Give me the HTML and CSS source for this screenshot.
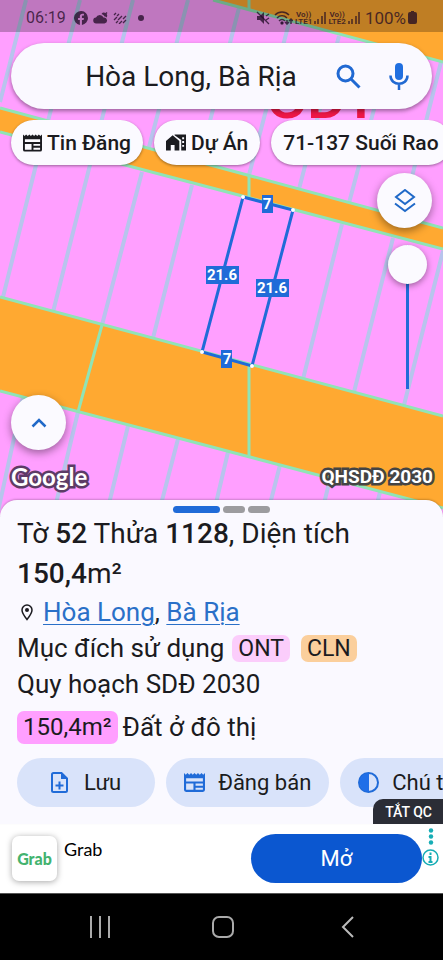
FILE: index.html
```html
<!DOCTYPE html>
<html lang="vi">

<head>
  <meta charset="UTF-8">
  <meta name="viewport" content="width=device-width, initial-scale=1.0">
  <title>Hòa Long, Bà Rịa</title>
  <link rel="stylesheet" href="styles.css">
</head>

<body>
  <div class="app">
    <section class="map">
      <svg class="map-canvas" viewBox="0 0 443 516" preserveAspectRatio="xMidYMin slice">
        <rect width="443" height="516" fill="#ff9fff"/>
        <!-- plot borders -->
        <g class="plot-line">
          <path d="M26 0L0 102M80 0L48 121M133 0L98 134M188 0L149 147M241 0L200 160M295 0L249 175M339 36L299 189M390 49L349 203M441 62L402 216"/>
          <path d="M46 125L3 297M100 125L53 312M142 172L102 325M192 185L153 338M342 224L303 379M393 238L354 392M443 251L404 405"/>
          <path d="M23 397L-3 516M78 412L53 516M128 426L106 516M178 439L158 516M228 452L213 516M280 465L267 516M330 479L321 516M380 492L374 516"/>
        </g>
        <!-- roads -->
        <g fill="#ffa931">
          <path d="M213 0L443 62V0Z"/>
          <path d="M0 108L443 228V249L0 132Z"/>
          <path d="M0 297L443 416V508L0 391Z"/>
        </g>
        <g class="road-line">
          <path d="M213 0L443 62M0 108L443 228M0 132L443 249M0 297L443 416M0 391L443 508"/>
          <path d="M249 0V10M249 175V198M249 366V457M102 325L78 412"/>
        </g>
        <text class="map-zone" x="267" y="118">ODT</text>
        <!-- selected plot -->
        <path class="plot" d="M243 197L293 210L252 366L202 352Z"/>
        <g fill="#fff">
          <circle cx="243" cy="197" r="2"/>
          <circle cx="293" cy="210" r="2"/>
          <circle cx="252" cy="366" r="2"/>
          <circle cx="202" cy="352" r="2"/>
        </g>
        <g fill="#206bd8">
          <rect x="262" y="195" width="11" height="18"/>
          <rect x="206" y="266" width="33" height="18"/>
          <rect x="256" y="279" width="33" height="18"/>
          <rect x="221" y="350" width="11" height="18"/>
        </g>
        <g class="plot-size">
          <text x="267" y="209">7</text>
          <text x="222" y="280">21.6</text>
          <text x="272" y="293">21.6</text>
          <text x="227" y="364">7</text>
        </g>
      </svg>

      <header class="status">
        <span class="clock">06:19</span>
        <svg width="14" height="14" viewBox="0 0 24 24"><path fill="currentColor" d="M24 12a12 12 0 1 0-14 11.900V15.500H7V12h3V9.400C10 6.400 11.800 4.700 14.500 4.700c1.300 0 2.600.200 2.600.200v3h-1.500c-1.500 0-2 .900-2 1.800V12H17l-.500 3.500H13.600v8.400A12 12 0 0 0 24 12z"/></svg>
        <svg width="15" height="12" viewBox="0 0 30 24"><path fill="currentColor" d="M7 23a6 6 0 0 1-1-12 8 8 0 0 1 15 0 6 6 0 0 1 2 12zM17 4a6 6 0 0 1 10 7c-1-1-2-2-4-2-1-2-3-4-6-5zM27 0l2 2-2 2-2-2z"/></svg>
        <svg width="14" height="12" viewBox="0 0 14 12"><path stroke="currentColor" stroke-width="1.300" d="M1 3l2-2M4 4l2-2M1 8l3-3M5 8l4-4M3 11l2-2M6 12l3-3M10 7l3-3M10 11l3-3" fill="none"/></svg>
        <span class="dot"></span>
        <span class="status-right">
          <svg width="14" height="14" viewBox="0 0 14 14"><path fill="currentColor" d="M1 5h3l4-4v12L4 9H1z"/><path d="M1 1l12 12M10 5l3-2M10 9l3-2" stroke="currentColor" stroke-width="1.300"/></svg>
          <svg class="wifi" width="19" height="14" viewBox="0 0 19 14" fill="none" stroke="currentColor" stroke-width="1.500"><path d="M1 4c4-4 10-4 14 0M3 7c3-3 7-3 10 0M5 10c2-2 4-2 6 0M13 13V9M11 11l2 2 2-2M17 8v5M15 10l2-2 2 2"/><circle cx="8" cy="12" r="1" fill="currentColor"/></svg>
          <span class="lte">Vo))<br>LTE1</span>
          <svg width="12" height="12" viewBox="0 0 12 12"><path stroke="currentColor" stroke-width="1.500" d="M1 12V9M4 12V7M8 12V4M11 12V0"/></svg>
          <span class="lte">Vo))<br>LTE2</span>
          <svg width="12" height="12" viewBox="0 0 12 12"><path stroke="currentColor" stroke-width="1.500" d="M1 12V9M4 12V7M8 12V4M11 12V0"/></svg>
          <span class="battery">100%</span>
          <svg width="9" height="13" viewBox="0 0 9 13"><path fill="currentColor" d="M3 0h3v1h1q2 0 2 2v8q0 2-2 2H2q-2 0-2-2V3q0-2 2-2h1z"/></svg>
        </span>
      </header>

      <form class="search">
        <input class="search-input" type="text" value="Hòa Long, Bà Rịa" aria-label="Tìm kiếm">
        <button class="icon-btn" type="button" aria-label="Tìm">
          <svg width="25" height="25" viewBox="0 0 25 25" fill="none" stroke="#2069d2" stroke-width="3"><circle cx="9.500" cy="9.500" r="7.500"/><path d="M15 15l8.500 8.500"/></svg>
        </button>
        <button class="icon-btn" type="button" aria-label="Giọng nói">
          <svg width="20" height="27" viewBox="0 0 20 27"><rect x="6" y="0" width="8" height="17" rx="4" fill="#206fe0"/><path d="M1.500 12.500c0 11 17 11 17 0M10 20v7" fill="none" stroke="#2069d2" stroke-width="2.500"/></svg>
        </button>
      </form>

      <nav class="chips">
        <button class="chip" type="button">
          <svg width="19" height="18" viewBox="0 0 20 18"><path fill="currentColor" fill-rule="evenodd" d="M0 0l1.700 1.500L3.300 0 5 1.500 6.700 0l1.600 1.500L10 0l1.700 1.500L13.300 0 15 1.500 16.700 0l1.600 1.500L20 0v16q0 2-2 2H2q-2 0-2-2zM2 5v3h16V5zM2 10v6h7v-6zM11 10v2h7v-2zM11 14v2h7v-2z"/></svg>
          Tin Đăng
        </button>
        <button class="chip" type="button">
          <svg width="20" height="17" viewBox="0 0 21 17"><path fill="currentColor" fill-rule="evenodd" d="M0 7l7-6 7 6v10H9v-6H5v6H0zM9 0h12v17h-5V6L9 1zM17 3v2h2V3zM17 7v2h2V7zM17 11v2h2v-2z"/></svg>
          Dự Án
        </button>
        <button class="chip" type="button">71-137 Suối Rao</button>
      </nav>

      <div class="map-tools">
        <button class="fab" type="button" aria-label="Lớp bản đồ">
          <svg width="22" height="24" viewBox="0 0 22 24" fill="none" stroke="#2069c8" stroke-width="2"><path d="M11 1l9 7-9 7-9-7z"/><path d="M1 14.500l10 7.500 10-7.500"/></svg>
        </button>
        <input class="opacity" type="range" min="0" max="100" value="0" aria-label="Độ trong suốt">
      </div>

      <div class="map-bottom">
        <button class="fab" type="button" aria-label="Mở rộng">
          <svg width="16" height="10" viewBox="0 0 16 10" fill="none" stroke="#2069c8" stroke-width="2.500"><path d="M1.500 8.500L8 2l6.500 6.500"/></svg>
        </button>
        <div class="map-credit">
          <span class="google">Google</span>
          <span class="layer-name">QHSDĐ 2030</span>
        </div>
      </div>
    </section>

    <main class="sheet">
      <div class="pager"><i class="active"></i><i></i><i></i></div>
      <h1 class="title">Tờ <b>52</b> Thửa <b>1128</b>, Diện tích <b>150,4</b>m²</h1>
      <p class="line">
        <svg class="pin" width="12" height="17" viewBox="0 0 12 17"><path d="M6 1a5 5 0 0 1 5 5c0 3-3 7-5 9.500C4 13 1 9 1 6a5 5 0 0 1 5-5z" fill="none" stroke="#1b1b20" stroke-width="1.500"/><circle cx="6" cy="6" r="2" fill="#1b1b20"/></svg>
        <span><a href="#">Hòa Long</a>, <a href="#">Bà Rịa</a></span>
      </p>
      <p class="line">Mục đích sử dụng <span class="tags"><span class="tag ont">ONT</span><span class="tag cln">CLN</span></span></p>
      <p class="line">Quy hoạch SDĐ 2030</p>
      <p class="line plan"><span class="area">150,4m²</span>Đất ở đô thị</p>
      <div class="actions">
        <button class="action save" type="button">
          <svg width="17" height="21" viewBox="0 0 17 21"><path d="M10.500 1H2.500Q1 1 1 2.500v16Q1 20 2.500 20h12q1.500 0 1.500-1.500V6.500z" fill="none" stroke="#206bd8" stroke-width="2"/><path d="M10 1v6h6z" fill="#206bd8"/><path d="M8.500 9.500v8M4.500 13.500h8" stroke="#206bd8" stroke-width="2"/></svg>
          Lưu
        </button>
        <button class="action" type="button">
          <svg width="21" height="19" viewBox="0 0 20 18"><path fill="#206bd8" fill-rule="evenodd" d="M0 0l1.700 1.500L3.300 0 5 1.500 6.700 0l1.600 1.500L10 0l1.700 1.500L13.300 0 15 1.500 16.700 0l1.600 1.500L20 0v16q0 2-2 2H2q-2 0-2-2zM2 5v3h16V5zM2 10v6h7v-6zM11 10v2h7v-2zM11 14v2h7v-2z"/></svg>
          Đăng bán
        </button>
        <button class="action" type="button">
          <svg width="21" height="21" viewBox="0 0 21 21"><circle cx="10.500" cy="10.500" r="9.500" fill="none" stroke="#206bd8" stroke-width="2"/><path d="M11 1a9.500 9.500 0 0 0 0 19z" fill="#206fe8"/></svg>
          Chú thích
        </button>
      </div>
      <button class="ad-off" type="button">TẮT QC</button>
    </main>

    <aside class="ad">
      <div class="ad-logo">Grab</div>
      <div class="ad-name">Grab</div>
      <button class="ad-open" type="button">Mở</button>
      <div class="ad-info">
        <svg width="6" height="17" viewBox="0 0 6 17" fill="#16adb5"><circle cx="3" cy="2.500" r="2.200"/><circle cx="3" cy="8.500" r="2.200"/><circle cx="3" cy="14.500" r="2.200"/></svg>
        <svg width="17" height="17" viewBox="0 0 17 17"><circle cx="8.500" cy="8.500" r="7.500" fill="none" stroke="#16adb5" stroke-width="1.500"/><path d="M8.500 3.500v2.500M6.500 8h2v5M6.500 13h4" fill="none" stroke="#16adb5" stroke-width="2"/></svg>
      </div>
    </aside>

    <footer class="nav">
      <button type="button" aria-label="Gần đây"><svg width="22" height="22" viewBox="0 0 22 22"><path d="M2 0v22M11 0v22M20 0v22" stroke="#aaa" stroke-width="2"/></svg></button>
      <button type="button" aria-label="Trang chủ"><svg width="22" height="22" viewBox="0 0 22 22"><rect x="1" y="1" width="20" height="20" rx="6" fill="none" stroke="#aaa" stroke-width="2"/></svg></button>
      <button type="button" aria-label="Quay lại"><svg width="13" height="22" viewBox="0 0 13 22"><path d="M12 1L2 11l10 10" fill="none" stroke="#bbb" stroke-width="2"/></svg></button>
    </footer>
  </div>
</body>

</html>
```
FILE: styles.css
```css
* {
  box-sizing: border-box;
}

body,
h1,
p {
  margin: 0;
}

body {
  font-family: Roboto, "Noto Sans", sans-serif;
  color: #1b1b20;
  background: #000;
}

button {
  font: inherit;
  color: inherit;
  border: none;
  padding: 0;
  cursor: pointer;
}

svg {
  flex: none;
}

.app {
  display: flex;
  flex-direction: column;
  min-height: 100vh;
  overflow: hidden;
}

/* map */
.map {
  position: relative;
  flex: 1;
  display: flex;
  flex-direction: column;
  padding-bottom: 26px;
}

.map-canvas {
  position: absolute;
  top: 0;
  left: 0;
  width: 100%;
  height: 100%;
}

.map > *:not(.map-canvas) {
  position: relative;
}

.plot-line {
  fill: none;
  stroke: #b8c4ed;
  stroke-width: 4;
}

.road-line {
  fill: none;
  stroke: #90e4b6;
  stroke-width: 3;
}

.map-zone {
  font: bold 52px "Liberation Sans", sans-serif;
  fill: #ee1747;
}

.plot {
  fill: none;
  stroke: #206bd8;
  stroke-width: 3;
}

.plot-size {
  font-size: 15px;
  font-weight: bold;
  fill: #fff;
  text-anchor: middle;
}

.status {
  display: flex;
  align-items: center;
  gap: 5px;
  height: 32px;
  padding: 3px 26px 0 26px;
  color: rgba(30, 8, 35, .75);
  background: rgba(0, 0, 0, .25);
}

.clock {
  font-size: 16px;
  margin-right: 3px;
}

.dot {
  width: 6px;
  height: 6px;
  margin-left: 6px;
  border-radius: 50%;
  background: currentColor;
}

.status-right {
  display: flex;
  align-items: center;
  gap: 2px;
  margin-left: auto;
}

.wifi {
  margin-left: 2px;
}

.lte {
  font-size: 8px;
  line-height: 7px;
  font-weight: bold;
  text-align: center;
}

.battery {
  font-size: 17px;
  margin-left: 3px;
}

.search {
  display: flex;
  align-items: center;
  gap: 28px;
  height: 66px;
  margin: 11px 11px 0;
  padding: 0 23px 0 63px;
  border-radius: 33px;
  background: #faf9ff;
  box-shadow: 0 2px 4px rgba(0, 0, 0, .4);
}

.search-input {
  flex: 1;
  min-width: 0;
  border: none;
  outline: none;
  padding: 0;
  background: none;
  color: #1b1b20;
  font: 28px Roboto, "Noto Sans", sans-serif;
  text-align: center;
}

.icon-btn {
  display: flex;
  background: none;
}

.chips {
  display: flex;
  gap: 11px;
  margin-top: 11px;
  padding-left: 11px;
  overflow: hidden;
  padding-bottom: 8px;
}

.chip {
  flex: none;
  display: flex;
  align-items: center;
  gap: 5px;
  height: 45px;
  padding: 0 12px;
  border-radius: 23px;
  background: #fbfaff;
  box-shadow: 0 1px 3px rgba(0, 0, 0, .4);
  font-size: 21px;
  font-weight: 500;
}

.map-tools {
  display: flex;
  flex-direction: column;
  align-items: flex-end;
  gap: 17px;
  padding-right: 11px;
}

.fab {
  display: flex;
  align-items: center;
  justify-content: center;
  width: 55px;
  height: 55px;
  border-radius: 50%;
  background: #fbfaff;
  box-shadow: 0 3px 8px rgba(0, 0, 0, .4);
}

.opacity {
  appearance: none;
  writing-mode: vertical-lr;
  width: 39px;
  height: 144px;
  margin: 0 5px;
  background: linear-gradient(#206bd8, #206bd8) center / 3px 100% no-repeat;
}

.opacity::-webkit-slider-thumb {
  appearance: none;
  width: 39px;
  height: 39px;
  border-radius: 50%;
  background: #fbfaff;
  box-shadow: 0 2px 6px rgba(0, 0, 0, .4);
}

.map-bottom {
  margin-top: auto;
  padding: 0 10px 0 11px;
}

.map-credit {
  display: flex;
  align-items: center;
  justify-content: space-between;
  height: 28px;
  margin-top: 12px;
}

.google,
.layer-name {
  color: #fff;
  paint-order: stroke fill;
  -webkit-text-stroke: 5px #444;
}

.google {
  font: bold 24px Lato, sans-serif;
  -webkit-text-stroke-color: #5d3b66;
}

.layer-name {
  font-size: 19px;
  font-weight: bold;
}

/* info sheet */
.sheet {
  position: relative;
  margin-top: -16px;
  padding: 6px 17px 17px;
  border-radius: 17px 17px 0 0;
  background: #faf9ff;
  box-shadow: 0 -1px 2px rgba(0, 0, 0, .2);
}

.pager {
  display: flex;
  justify-content: center;
  gap: 3px;
  margin-bottom: 1px;
}

.pager i {
  width: 22px;
  height: 7px;
  border-radius: 4px;
  background: #9c9c9f;
}

.pager .active {
  width: 47px;
  background: #206bd8;
}

.title {
  font-size: 28px;
  line-height: 40px;
  font-weight: normal;
}

.title b {
  font-weight: 500;
}

.line {
  display: flex;
  align-items: center;
  height: 36px;
  font-size: 26px;
}

.line a {
  color: #2a70c8;
  text-underline-offset: 3px;
  text-decoration-thickness: 1px;
}

.pin {
  margin: 0 10px 0 4px;
}

.tags {
  display: flex;
  gap: 11px;
  margin-left: 8px;
}

.tag {
  height: 27px;
  line-height: 27px;
  padding: 0 6px;
  border-radius: 7px;
  font-size: 23px;
}

.ont {
  background: #fbcdfb;
}

.cln {
  background: #fbcf9c;
}

.plan {
  height: 50px;
}

.area {
  height: 33px;
  line-height: 33px;
  padding: 0 6px;
  margin-right: 5px;
  border-radius: 7px;
  background: #ff9fff;
  font-size: 24px;
}

.actions {
  display: flex;
  gap: 11px;
  margin: 6px -17px 0 0;
  overflow: hidden;
}

.action {
  flex: none;
  display: flex;
  align-items: center;
  gap: 13px;
  height: 49px;
  padding: 0 18px;
  border-radius: 25px;
  background: #d9e3fa;
  font-size: 22px;
}

.save {
  gap: 16px;
  padding: 0 34px;
}

.ad-off {
  position: absolute;
  right: 0;
  bottom: 0;
  height: 25px;
  padding: 0 11px 0 12px;
  border-radius: 10px 0 0;
  background: #2b2d36;
  color: #fff;
  font-size: 14px;
  font-weight: 500;
}

/* ad banner */
.ad {
  display: flex;
  align-items: center;
  height: 69px;
  padding: 0 4px 0 12px;
  background: #fff;
}

.ad-logo {
  width: 45px;
  height: 45px;
  line-height: 45px;
  border-radius: 7px;
  background: #fff;
  box-shadow: 0 1px 6px rgba(0, 0, 0, .35);
  color: #43b36f;
  font-family: Lato, sans-serif;
  font-size: 16px;
  font-weight: 900;
  text-align: center;
}

.ad-name {
  align-self: flex-start;
  margin: 14px auto 0 7px;
  font-family: Lato, sans-serif;
  font-size: 18px;
  color: #000;
}

.ad-open {
  width: 171px;
  height: 49px;
  border-radius: 25px;
  background: #0b57d0;
  color: #fff;
  font-size: 22px;
}

.ad-info {
  align-self: flex-start;
  display: flex;
  flex-direction: column;
  align-items: center;
  gap: 4px;
  margin-top: 4px;
}

/* system buttons */
.nav {
  display: grid;
  grid-template-columns: repeat(3, 1fr);
  height: 67px;
  padding: 0 34px 0 38px;
  border-top: 1px solid #555;
  background: #000;
}

.nav button {
  display: flex;
  align-items: center;
  justify-content: center;
  background: none;
}
```
